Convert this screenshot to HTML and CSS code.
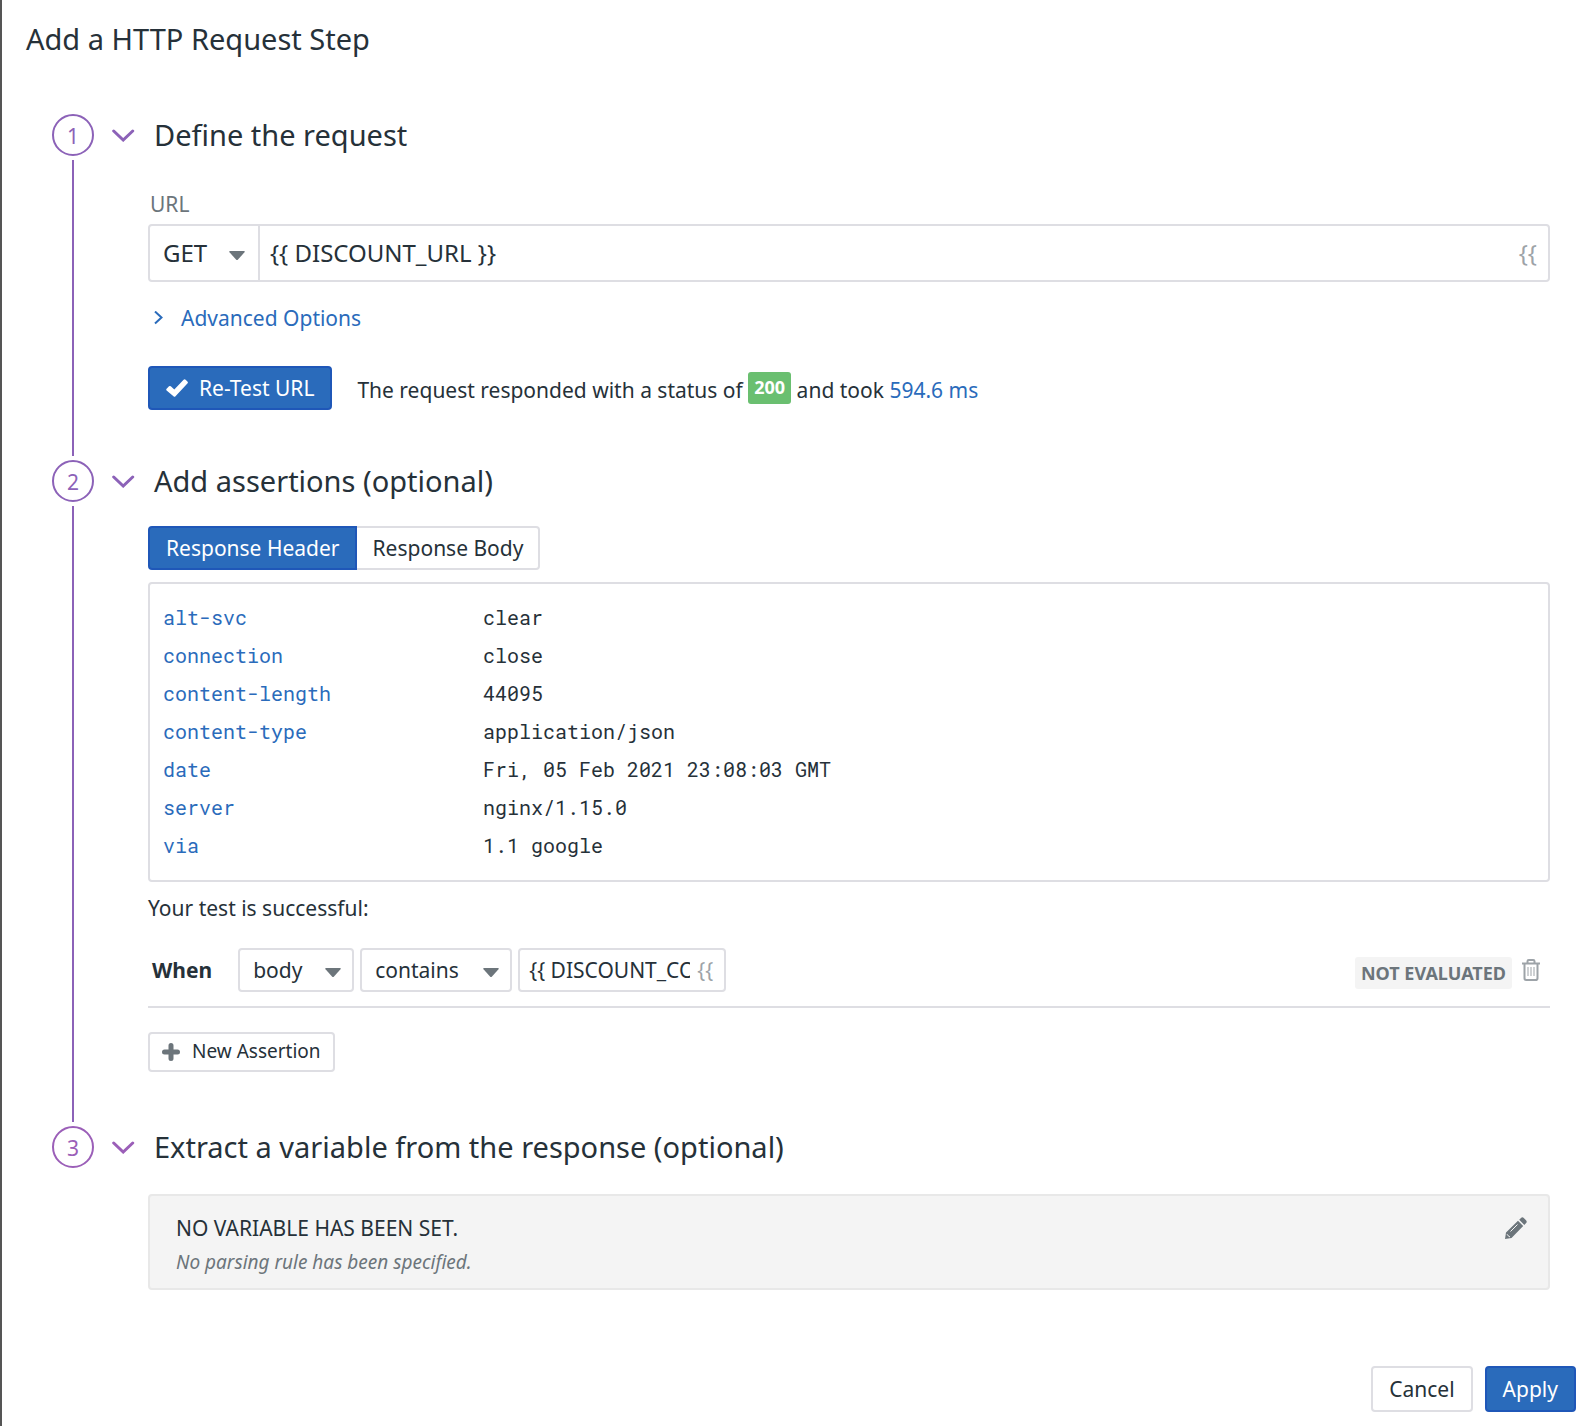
FILE: index.html
```html
<!DOCTYPE html>
<html lang="en">
<head>
<meta charset="utf-8">
<meta name="viewport" content="width=device-width, initial-scale=1">
<title>Add a HTTP Request Step</title>
<link rel="stylesheet" href="styles.css">
</head>
<body>
<form class="panel">
  <h1 class="panel-title">Add a HTTP Request Step</h1>

  <ol class="steps">
    <li class="step step-request">
      <div class="rail"><span class="rail-number">1</span></div>
      <section class="step-content">
        <h2 class="step-heading">
          <svg class="chevron" viewBox="0 0 24 14" aria-hidden="true"><path d="M1.700 3 L11.200 12 L20.700 3"/></svg>
          Define the request
        </h2>
        <div class="step-body">
          <label class="field-label" for="url">URL</label>
          <div class="url-field">
            <div class="select select-method">
              <select aria-label="Method"><option>GET</option></select>
              <svg class="caret" viewBox="0 0 16 10" aria-hidden="true"><path d="M1 0H15Q16.500 0 15.500 1.300L9 8.500Q8 9.600 7 8.500L.5 1.300Q-.5 0 1 0Z"/></svg>
            </div>
            <input class="url-input" id="url" type="text" value="{{ DISCOUNT_URL }}">
            <button class="variable-button" type="button" aria-label="Insert variable">{{</button>
          </div>
          <a class="advanced" href="#advanced">
            <svg class="advanced-icon" viewBox="0 0 9 14" aria-hidden="true"><path d="M1 .5 L7.500 6.500 L1 12.500"/></svg>
            Advanced Options
          </a>
          <div class="test-row">
            <button class="button button-primary" type="button">
              <svg class="check-icon" viewBox="0 0 22 18" aria-hidden="true"><path d="M.6 9.800L3 7.300Q3.900 6.500 4.800 7.300L8.300 10.600L17.600.8Q18.600-.2 19.600.8L21.400 2.600Q22.400 3.600 21.400 4.600L9.500 17.200Q8.500 18.300 7.500 17.200L.6 11.400Q-.2 10.600.6 9.800Z"/></svg>
              Re-Test URL
            </button>
            <p class="status">The request responded with a status of <span class="status-code">200</span> and took <a href="#timing">594.6 ms</a></p>
          </div>
        </div>
      </section>
    </li>

    <li class="step step-assertions">
      <div class="rail"><span class="rail-number">2</span></div>
      <section class="step-content">
        <h2 class="step-heading">
          <svg class="chevron" viewBox="0 0 24 14" aria-hidden="true"><path d="M1.700 3 L11.200 12 L20.700 3"/></svg>
          Add assertions (optional)
        </h2>
        <div class="step-body">
          <div class="tabs">
            <button class="button button-primary" type="button">Response Header</button>
            <button class="button" type="button">Response Body</button>
          </div>
          <div class="headers">
            <table class="headers-table">
              <tbody>
                <tr><th scope="row">alt-svc</th><td>clear</td></tr>
                <tr><th scope="row">connection</th><td>close</td></tr>
                <tr><th scope="row">content-length</th><td>44095</td></tr>
                <tr><th scope="row">content-type</th><td>application/json</td></tr>
                <tr><th scope="row">date</th><td>Fri, 05 Feb 2021 23:08:03 GMT</td></tr>
                <tr><th scope="row">server</th><td>nginx/1.15.0</td></tr>
                <tr><th scope="row">via</th><td>1.1 google</td></tr>
              </tbody>
            </table>
          </div>
          <p class="result">Your test is successful:</p>
          <div class="assertion">
            <span class="when">When</span>
            <div class="select select-box select-source">
              <select aria-label="Source"><option>body</option></select>
              <svg class="caret" viewBox="0 0 16 10" aria-hidden="true"><path d="M1 0H15Q16.500 0 15.500 1.300L9 8.500Q8 9.600 7 8.500L.5 1.300Q-.5 0 1 0Z"/></svg>
            </div>
            <div class="select select-box select-operator">
              <select aria-label="Operator"><option>contains</option></select>
              <svg class="caret" viewBox="0 0 16 10" aria-hidden="true"><path d="M1 0H15Q16.500 0 15.500 1.300L9 8.500Q8 9.600 7 8.500L.5 1.300Q-.5 0 1 0Z"/></svg>
            </div>
            <div class="value-field">
              <input type="text" aria-label="Value" value="{{ DISCOUNT_CODE }}">
              <button class="variable-button" type="button" aria-label="Insert variable">{{</button>
            </div>
            <span class="evaluation">NOT EVALUATED</span>
            <button class="icon-button" type="button" aria-label="Delete assertion">
              <svg class="trash-icon" viewBox="0 0 18 22" aria-hidden="true"><path d="M0 4.500H18M5.500 4V2.300Q5.500 1 6.800 1H11.200Q12.500 1 12.500 2.300V4M2.500 5V19.200Q2.500 21 4.300 21H13.700Q15.500 21 15.500 19.200V5"/><path class="trash-bars" d="M6 8V17M9 8V17M12 8V17"/></svg>
            </button>
          </div>
          <button class="button button-add" type="button">
            <svg class="plus-icon" viewBox="0 0 18 18" aria-hidden="true"><path d="M9 2.500V15.500M2.500 9H15.500"/></svg>
            New Assertion
          </button>
        </div>
      </section>
    </li>

    <li class="step step-variable">
      <div class="rail"><span class="rail-number">3</span></div>
      <section class="step-content">
        <h2 class="step-heading">
          <svg class="chevron" viewBox="0 0 24 14" aria-hidden="true"><path d="M1.700 3 L11.200 12 L20.700 3"/></svg>
          Extract a variable from the response (optional)
        </h2>
        <div class="step-body">
          <div class="variable">
            <div>
              <p class="variable-name">NO VARIABLE HAS BEEN SET.</p>
              <p class="variable-rule">No parsing rule has been specified.</p>
            </div>
            <button class="icon-button" type="button" aria-label="Edit variable">
              <svg class="pencil-icon" viewBox="0 0 22 22" aria-hidden="true"><path class="pencil-fill" d="M0 22L1 15.500L13 3.800L18.200 9L6.500 21ZM14.200 2.700L16 .9Q17.300-.4 18.800 1L21 3.200Q22.400 4.700 21.100 6L19.300 7.900Z"/><path class="pencil-gap" d="M5.500 14.500L12.500 7.500M2 17.200L3.200 18.800L5 20"/></svg>
            </button>
          </div>
        </div>
      </section>
    </li>
  </ol>

  <footer class="actions">
    <button class="button button-large" type="button">Cancel</button>
    <button class="button button-large button-primary" type="button">Apply</button>
  </footer>
</form>
</body>
</html>
```

FILE: styles.css
```css
* {
  box-sizing: border-box;
}

body {
  margin: 0;
  background: #fff;
  color: #263139;
  font: 21px/28px "Noto Sans", "Open Sans", sans-serif;
}

h1, h2, p, ol {
  margin: 0;
  padding: 0;
}

button, input, select {
  margin: 0;
  font: inherit;
  color: inherit;
}

a {
  color: #2a6bbb;
  text-decoration: none;
}

svg {
  flex: none;
  display: block;
}

.panel {
  min-height: 100vh;
  padding-bottom: 14px;
  border-left: 2px solid #555;
}

.panel-title {
  padding: 18px 24px 54px;
  font-size: 29px;
  line-height: 42px;
  font-weight: 400;
}

/* Numbered steps joined by a vertical rail */
.steps {
  padding: 0 46px 0 50px;
  list-style: none;
}

.step {
  display: flex;
  gap: 18px;
}

.rail {
  display: flex;
  flex-direction: column;
  align-items: center;
  gap: 4px;
  color: #8c62b8;
}

.rail-number {
  width: 42px;
  height: 42px;
  border: 2px solid;
  border-radius: 50%;
  line-height: 40px;
  text-align: center;
}

.rail::after {
  content: "";
  flex: 1;
  width: 2px;
  margin-bottom: 4px;
  background: currentColor;
}

.step:last-child .rail {
  color: #9b5fb8;
}

.step:last-child .rail::after {
  display: none;
}

.step-content {
  flex: 1;
  min-width: 0;
}

.step-heading {
  display: flex;
  align-items: center;
  gap: 18px;
  font-size: 29px;
  line-height: 42px;
  font-weight: 400;
}

.step-body {
  padding-left: 36px;
}

.chevron {
  width: 24px;
  height: 14px;
  fill: none;
  stroke: #8c62b8;
  stroke-width: 3;
  stroke-linecap: round;
}

.step-variable .chevron {
  stroke: #9b5fb8;
}

.step-request .step-body {
  padding-top: 34px;
  padding-bottom: 50px;
}

.step-assertions .step-body {
  padding-top: 24px;
  padding-bottom: 54px;
}

.step-variable .step-body {
  padding-top: 26px;
}

.field-label {
  display: block;
  margin-bottom: 6px;
  padding-left: 2px;
  color: #6c757b;
}

.url-field {
  display: flex;
  border: 2px solid #dedee3;
  border-radius: 4px;
  font-size: 24px;
  line-height: 34px;
}

.select {
  position: relative;
}

.select select {
  width: 100%;
  padding: 10px 13px;
  border: 0;
  background: none;
  appearance: none;
}

.caret {
  position: absolute;
  top: 50%;
  right: 13px;
  width: 16px;
  height: 10px;
  margin-top: -2px;
  fill: #6c757b;
  pointer-events: none;
}

.select-method {
  width: 110px;
  border-right: 2px solid #dedee3;
}

.url-input {
  flex: 1;
  min-width: 0;
  padding: 10px;
  border: 0;
  background: none;
}

.variable-button {
  padding: 0 11px;
  border: 0;
  background: none;
  color: #9da3a8;
}

.advanced {
  display: flex;
  align-items: center;
  gap: 18px;
  width: max-content;
  margin-top: 22px;
  padding-left: 6px;
}

.advanced-icon {
  width: 9px;
  height: 14px;
  fill: none;
  stroke: currentColor;
  stroke-width: 2;
}

.test-row {
  display: flex;
  align-items: center;
  gap: 25px;
  margin-top: 34px;
}

.button {
  display: flex;
  align-items: center;
  padding: 6px 16px;
  border: 2px solid #dedee3;
  border-radius: 4px;
  background: #fff;
  line-height: 28px;
}

.button-primary {
  border-color: #1f57b8;
  background: #2a6bbb;
  color: #fff;
}

.check-icon {
  width: 22px;
  height: 18px;
  margin-right: 11px;
  fill: currentColor;
}

.status-code {
  display: inline-block;
  padding: 0 6px 2px;
  border-radius: 3px;
  background: #6abf70;
  color: #fff;
  font-size: 18px;
  line-height: 30px;
  font-weight: 700;
  vertical-align: 4px;
}

.tabs {
  display: flex;
}

.tabs .button {
  padding-right: 15px;
}

.tabs .button:first-child {
  border-radius: 4px 0 0 4px;
}

.tabs .button:last-child {
  border-left: 0;
  border-radius: 0 4px 4px 0;
}

/* Response headers */
.headers {
  margin-top: 12px;
  padding: 14px 13px 16px;
  border: 2px solid #dedee3;
  border-radius: 4px;
}

.headers-table {
  width: 100%;
  border-collapse: collapse;
  font: 20px/38px "Roboto Mono", "DejaVu Sans Mono", monospace;
}

.headers-table th,
.headers-table td {
  padding: 0;
  font-weight: 400;
  text-align: left;
}

.headers-table th {
  width: 320px;
  color: #2a6bbb;
}

.result {
  margin: 12px 0 26px;
}

.assertion {
  display: flex;
  align-items: center;
  gap: 6px;
  padding: 0 10px 14px 4px;
  border-bottom: 2px solid #dedee3;
}

.when {
  margin-right: 20px;
  font-weight: 700;
}

.select-box,
.value-field {
  border: 2px solid #dedee3;
  border-radius: 4px;
}

.select-box select {
  padding: 6px 13px;
}

.select-box .caret {
  right: 11px;
}

.select-source {
  width: 116px;
}

.select-operator {
  width: 152px;
}

.value-field {
  display: flex;
  width: 208px;
}

.value-field input {
  flex: 1;
  min-width: 0;
  margin-left: 9px;
  padding: 6px 0;
  border: 0;
  background: none;
}

.value-field .variable-button {
  padding: 0 11px 0 7px;
}

.evaluation {
  margin-top: 6px;
  margin-left: auto;
  padding: 2px 6px;
  border-radius: 3px;
  background: #f4f4f4;
  color: #6c757b;
  font-size: 18px;
  font-weight: 700;
}

.icon-button {
  flex: none;
  padding: 0;
  border: 0;
  background: none;
}

.assertion .icon-button {
  margin-left: 4px;
}

.trash-icon {
  width: 18px;
  height: 22px;
  fill: none;
  stroke: #9da3a8;
  stroke-width: 2;
}

.trash-bars {
  stroke-width: 1;
}

.button-add {
  margin-top: 24px;
  padding: 3px 12px 5px;
  font-size: 19px;
}

.plus-icon {
  width: 18px;
  height: 18px;
  margin-right: 12px;
  margin-top: 2px;
  stroke: #6c757b;
  stroke-width: 5;
  stroke-linecap: round;
}

.variable {
  display: flex;
  align-items: flex-start;
  justify-content: space-between;
  padding: 15px 21px 9px 26px;
  border: 2px solid #e8e8e8;
  border-radius: 4px;
  background: #f4f4f4;
  line-height: 34px;
}

.variable-rule {
  padding-top: 1px;
  color: #6c757b;
  font-size: 19px;
  font-style: italic;
  line-height: 33px;
}

.variable .icon-button {
  padding-top: 6px;
}

.pencil-icon {
  width: 22px;
  height: 22px;
}

.pencil-fill {
  fill: #6c757b;
}

.pencil-gap {
  fill: none;
  stroke: #f4f4f4;
  stroke-width: 1;
}

.actions {
  display: flex;
  justify-content: flex-end;
  gap: 12px;
  margin-top: 76px;
  padding-right: 20px;
}

.button-large {
  padding: 6px 16px;
  line-height: 30px;
}
```
